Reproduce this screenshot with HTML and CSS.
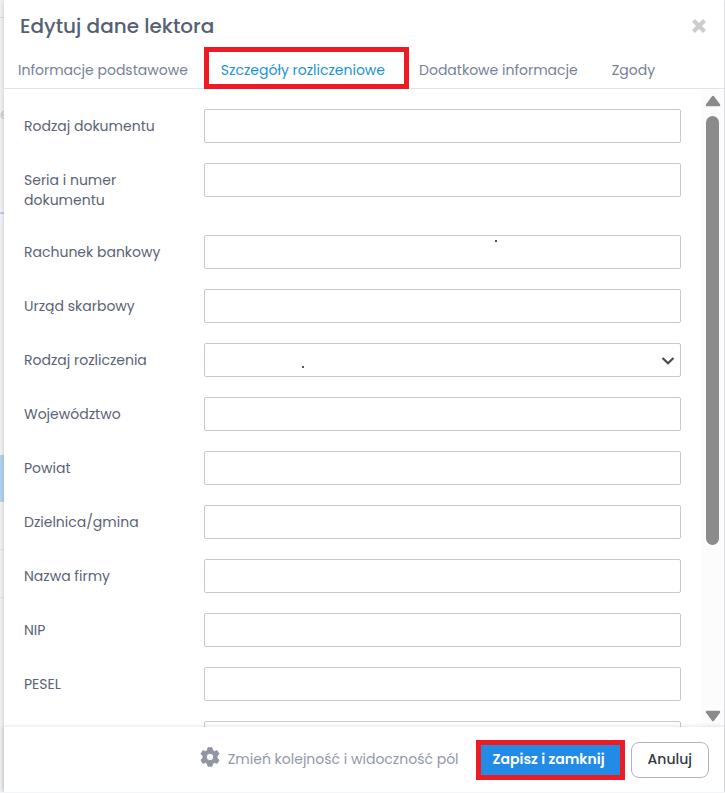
FILE: index.html
```html
<!DOCTYPE html>
<html lang="pl">
<head>
    <meta charset="UTF-8">
    <meta name="viewport" content="width=device-width, initial-scale=1.0">
    <title>Edytuj dane lektora</title>
    <link rel="stylesheet" href="styles.css">
</head>
<body>
    <div class="page-behind">
        <div class="behind-top"></div>
        <div class="behind-head">e</div>
        <div class="behind-bar"></div>
        <div class="behind-selected"></div>
        <div class="behind-row"></div>
        <div class="behind-row"></div>
    </div>

    <form class="modal">
        <header class="modal-header">
            <h1>Edytuj dane lektora</h1>
            <button type="button" class="close" aria-label="Zamknij">
                <svg width="14" height="14" viewBox="0 0 14 14"><path d="M3 3l8 8M11 3l-8 8" stroke="#ccc" stroke-width="4.2" stroke-linecap="square"/></svg>
            </button>
        </header>

        <nav class="tabs">
            <a href="#podstawowe">Informacje podstawowe</a>
            <a href="#rozliczenia" class="active">Szczegóły rozliczeniowe</a>
            <a href="#dodatkowe">Dodatkowe informacje</a>
            <a href="#zgody">Zgody</a>
        </nav>

        <div class="modal-body">
            <div class="fields">
                <div class="field"><label for="rodzajDokumentu">Rodzaj dokumentu</label><input type="text" id="rodzajDokumentu"></div>
                <div class="field"><label for="seria">Seria i numer dokumentu</label><input type="text" id="seria"></div>
                <div class="field marked-account"><label for="rachunek">Rachunek bankowy</label><input type="text" id="rachunek"></div>
                <div class="field"><label for="urzad">Urząd skarbowy</label><input type="text" id="urzad"></div>
                <div class="field marked-type">
                    <label for="rodzajRozliczenia">Rodzaj rozliczenia</label>
                    <select id="rodzajRozliczenia"><option></option></select>
                    <svg class="chevron" width="14" height="10" viewBox="0 0 14 10"><path d="M1.5 2L7 7.300 12.500 2" fill="none" stroke="#4a4a4a" stroke-width="2.2"/></svg>
                </div>
                <div class="field"><label for="wojewodztwo">Województwo</label><input type="text" id="wojewodztwo"></div>
                <div class="field"><label for="powiat">Powiat</label><input type="text" id="powiat"></div>
                <div class="field"><label for="gmina">Dzielnica/gmina</label><input type="text" id="gmina"></div>
                <div class="field"><label for="firma">Nazwa firmy</label><input type="text" id="firma"></div>
                <div class="field"><label for="nip">NIP</label><input type="text" id="nip"></div>
                <div class="field"><label for="pesel">PESEL</label><input type="text" id="pesel"></div>
                <div class="field"><label for="regon"></label><input type="text" id="regon"></div>
            </div>
            <div class="scrollbar">
                <svg width="16" height="12" viewBox="0 0 16 12"><path d="M8 2L14 10H2z" fill="#8b8b8b" stroke="#8b8b8b" stroke-width="2.500" stroke-linejoin="round"/></svg>
                <div class="track"><div class="thumb"></div></div>
                <svg width="16" height="12" viewBox="0 0 16 12"><path d="M8 10L14 2H2z" fill="#8b8b8b" stroke="#8b8b8b" stroke-width="2.500" stroke-linejoin="round"/></svg>
            </div>
        </div>

        <footer class="modal-footer">
            <button type="button" class="settings">
                <svg width="20" height="20" viewBox="0 0 20 20"><path fill="#8f95a3" stroke="#8f95a3" stroke-linejoin="round" fill-rule="evenodd" d="M8 .8h4l.7 2.700 1.700 1 2.700-.8 1.900 3.200-2 2v2.200l2 2-1.900 3.200-2.700-.8-1.700 1-.7 2.700H8l-.7-2.700-1.700-1-2.700.8L1 13.100l2-2V8.900l-2-2 1.900-3.200 2.700.8 1.700-1zM10 6.300a3.700 3.700 0 1 0 0 7.400 3.700 3.700 0 0 0 0-7.400z"/></svg>
                Zmień kolejność i widoczność pól
            </button>
            <button type="submit" class="save">Zapisz i zamknij</button>
            <button type="button" class="cancel">Anuluj</button>
        </footer>
    </form>
</body>
</html>
```

FILE: styles.css
```css
* {
    box-sizing: border-box;
}
body {
    margin: 0;
    font-family: Poppins, Inter, sans-serif;
    font-size: 14px;
    line-height: 20px;
    color: #5b6376;
    background: #f4f5f7;
    overflow: hidden;
}
button {
    font: inherit;
    cursor: pointer;
}

/* page under the dialog */
.page-behind {
    position: absolute;
    top: 0;
    bottom: 0;
    left: 0;
    width: 20px;
    overflow: hidden;
}
.behind-top {
    height: 18px;
    border-bottom: 1px solid #d9dce3;
}
.behind-head {
    height: 194px;
    padding-top: 86px;
    color: #c9cbd2;
}
.behind-bar {
    height: 2px;
    background: #b3d6f4;
}
.behind-selected {
    height: 47px;
    margin-top: 241px;
    background: #b3d6f4;
}
.behind-row {
    height: 48px;
    border-bottom: 1px solid #e4e6ea;
}

.modal {
    position: relative;
    display: flex;
    flex-direction: column;
    height: calc(100vh - 1px);
    margin: 0 1px 0 4px;
    background: #fff;
    box-shadow: 0 0 6px rgba(0, 0, 0, 0.2);
}
.modal-header {
    display: flex;
    justify-content: space-between;
    align-items: center;
    height: 52px;
    padding: 0 18px 0 16px;
}
.modal-header h1 {
    margin: 0;
    font-size: 20px;
    font-weight: 500;
    color: #566075;
}
.close {
    display: flex;
    padding: 0;
    border: none;
    background: none;
}
.tabs {
    display: flex;
    height: 37px;
    border-bottom: 1px solid #e2e4e9;
}
.tabs a {
    position: relative;
    padding: 8px 17px 0;
    color: #778198;
    text-decoration: none;
    white-space: nowrap;
}
.tabs a:first-child {
    padding: 8px 16px 0 14px;
}
.tabs .active {
    color: #1a94d8;
}
.tabs .active::after {
    content: "";
    position: absolute;
    inset: -5px -7px -1px 0;
    border: 5px solid #ed1c24;
}

.modal-body {
    flex: 1;
    min-height: 0;
    display: flex;
}
.fields {
    flex: 1;
    padding: 20px 20px 0;
    overflow-y: auto;
    scrollbar-width: none;
}
.field {
    position: relative;
    display: grid;
    grid-template-columns: 140px 1fr;
    column-gap: 40px;
    align-items: start;
    margin-bottom: 20px;
}
.field label {
    padding: 7px 0 5px;
}
.field input,
.field select {
    width: 100%;
    height: 34px;
    padding: 0 10px;
    border: 1px solid #c8c8c8;
    border-radius: 2px;
    background: #fff;
    font: inherit;
    appearance: none;
}
.chevron {
    position: absolute;
    right: 6px;
    top: 13px;
    pointer-events: none;
}
.marked-account::after,
.marked-type::after {
    content: "";
    position: absolute;
    width: 2px;
    height: 2px;
    background: #555;
}
.marked-account::after {
    left: 471px;
    top: 5px;
}
.marked-type::after {
    left: 278px;
    top: 23px;
}

.scrollbar {
    width: 23px;
    display: flex;
    flex-direction: column;
    align-items: center;
    padding: 6px 0 5px;
    background: #fcfcfc;
}
.track {
    flex: 1;
    width: 13px;
    margin: 9px 0 7px;
}
.thumb {
    height: 73%;
    border-radius: 7px;
    background: #8b8b8b;
}

.modal-footer {
    position: relative;
    display: flex;
    justify-content: flex-end;
    align-items: center;
    height: 65px;
    padding: 0 15px 0 0;
    background: #fff;
    box-shadow: 0 0 5px rgba(0, 0, 0, 0.15);
}
.settings {
    display: flex;
    align-items: center;
    gap: 8px;
    margin-right: 17px;
    padding: 0 0 2px;
    border: none;
    background: none;
    color: #9298a6;
    white-space: nowrap;
}
.settings svg {
    margin-bottom: 4px;
}
.save {
    height: 40px;
    padding: 0 15px 2px 12px;
    border: 5px solid #ed1c24;
    background: #228be6;
    color: #fff;
    font-weight: 600;
    white-space: nowrap;
}
.cancel {
    height: 36px;
    margin-left: 6px;
    padding: 0 16px 2px;
    border: 1px solid #adb5bd;
    border-radius: 8px;
    background: #fff;
    color: #343a40;
    font-weight: 500;
}
```
